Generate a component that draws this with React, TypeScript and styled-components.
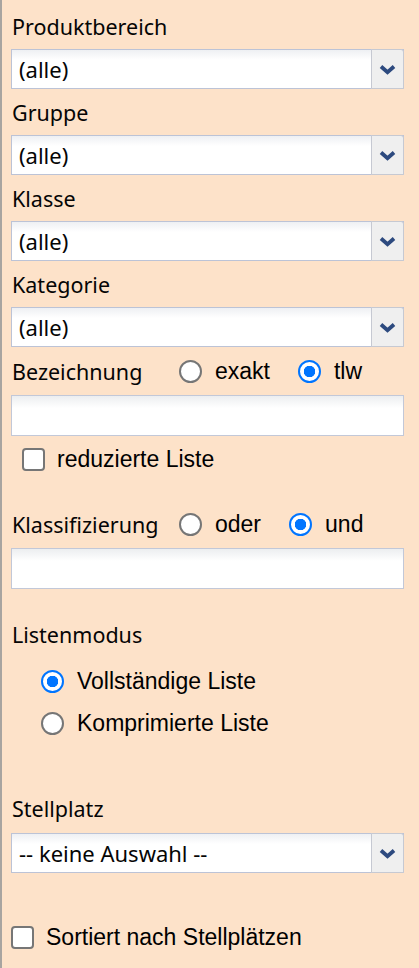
import React from "react";
import styled, { createGlobalStyle } from "styled-components";

const Global = createGlobalStyle`
  html, body { margin: 0; padding: 0; background: #fde2c9; }
  * { box-sizing: border-box; }
`;

const Panel = styled.div`
  width: 419px;
  min-height: 968px;
  background: #fde2c9;
  border-left: 2px solid #a8a4a0;
  padding: 3px 15px 0 9px;
  display: flex;
  flex-direction: column;
  font-family: "Noto Sans", "Open Sans", sans-serif;
  color: #050505;
`;

const Label = styled.div<{ $h?: number; $mt?: number }>`
  height: ${(p) => p.$h ?? 46}px;
  margin-top: ${(p) => p.$mt ?? 0}px;
  display: flex;
  align-items: center;
  font-size: 21.5px;
  padding-left: 1px;
`;

const SelectBox = styled.div`
  height: 40px;
  display: flex;
  border: 1px solid #bcc3d6;
  background: linear-gradient(#eef0f3, #ffffff 10px);
`;

const SelectText = styled.div`
  flex: 1;
  display: flex;
  align-items: center;
  padding-left: 7px;
  font-size: 22px;
`;

const ArrowBox = styled.div`
  width: 33px;
  margin: -1px -1px -1px 0;
  border: 1px solid #c6c9d2;
  border-radius: 0 3px 0 0;
  background: #efefef;
  display: flex;
  align-items: center;
  justify-content: center;
`;

const Select = ({ value }: { value: string }) => (
  <SelectBox>
    <SelectText>{value}</SelectText>
    <ArrowBox>
      <svg width="17" height="11" viewBox="0 0 17 11">
        <polyline points="2,2.5 8.5,8.2 15,2.5" fill="none" stroke="#2d4a7f" strokeWidth="3.8" strokeLinejoin="miter" />
      </svg>
    </ArrowBox>
  </SelectBox>
);

const TextInput = styled.div`
  height: 41px;
  border: 1px solid #c2c8d8;
  background: linear-gradient(#eceef0, #ffffff 12px);
`;

const Row = styled.div<{ $h?: number; $mt?: number; $pl?: number }>`
  height: ${(p) => p.$h ?? 48}px;
  margin-top: ${(p) => p.$mt ?? 0}px;
  padding-left: ${(p) => p.$pl ?? 0}px;
  display: flex;
  align-items: center;
`;

const RowLabel = styled.span<{ $w: number }>`
  width: ${(p) => p.$w}px;
  font-size: 21.5px;
  padding-left: 1px;
`;

const Option = styled.label<{ $mr?: number }>`
  display: flex;
  align-items: center;
  margin-right: ${(p) => p.$mr ?? 0}px;
  font-family: "Liberation Sans", Arial, sans-serif;
  font-size: 23px;
  color: #000;
`;

const Radio = styled.span<{ $on?: boolean }>`
  width: 23px;
  height: 23px;
  border-radius: 50%;
  border: 2px solid ${(p) => (p.$on ? "#0075ff" : "#767676")};
  background: ${(p) => (p.$on ? "radial-gradient(circle, #0075ff 0 5.5px, #fff 6px)" : "#fff")};
  margin-right: 13px;
  flex: none;
`;

const Check = styled.span`
  width: 23px;
  height: 23px;
  border-radius: 4px;
  border: 2px solid #767676;
  background: #fff;
  margin-right: 12px;
  flex: none;
`;

export default function App() {
  return (
    <>
      <Global />
      <Panel>
        <Label>Produktbereich</Label>
        <Select value="(alle)" />
        <Label>Gruppe</Label>
        <Select value="(alle)" />
        <Label>Klasse</Label>
        <Select value="(alle)" />
        <Label>Kategorie</Label>
        <Select value="(alle)" />
        <Row>
          <RowLabel $w={168}>Bezeichnung</RowLabel>
          <Option $mr={28}><Radio />exakt</Option>
          <Option><Radio $on />tlw</Option>
        </Row>
        <TextInput />
        <Row $h={46} $pl={11}>
          <Option><Check />reduzierte Liste</Option>
        </Row>
        <Row $mt={18}>
          <RowLabel $w={168}>Klassifizierung</RowLabel>
          <Option $mr={28}><Radio />oder</Option>
          <Option><Radio $on />und</Option>
        </Row>
        <TextInput />
        <Label $h={48} $mt={21}>Listenmodus</Label>
        <Row $h={42} $mt={2} $pl={30}>
          <Option><Radio $on />Vollständige Liste</Option>
        </Row>
        <Row $h={43} $pl={30}>
          <Option><Radio />Komprimierte Liste</Option>
        </Row>
        <Label $h={50} $mt={38}>Stellplatz</Label>
        <Select value="-- keine Auswahl --" />
        <Row $h={46} $mt={41}>
          <Option><Check />Sortiert nach Stellplätzen</Option>
        </Row>
      </Panel>
    </>
  );
}
